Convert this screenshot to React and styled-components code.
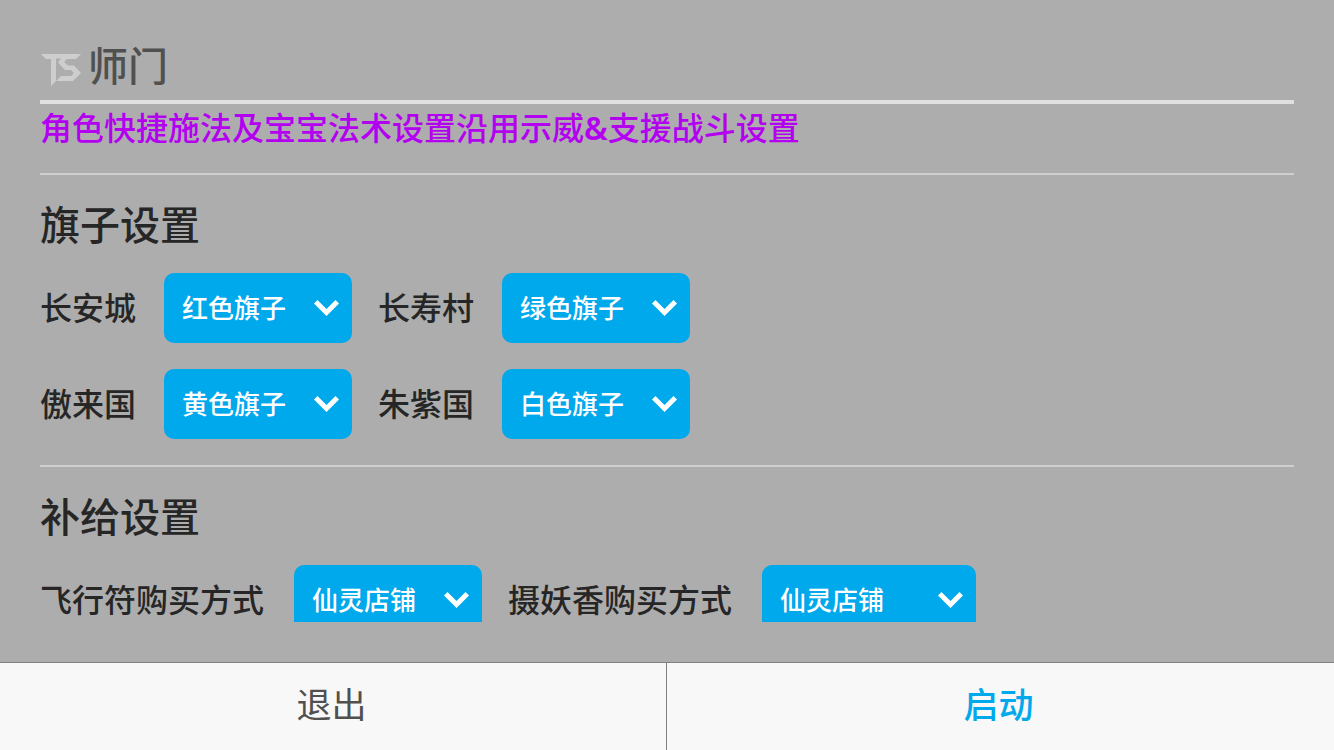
import React from 'react';
import styled, { createGlobalStyle } from 'styled-components';

const GlobalStyle = createGlobalStyle`
  * {
    box-sizing: border-box;
  }

  body {
    margin: 0;
    background: #adadad;
    color: #262626;
    font-family: 'Noto Sans', 'Noto Sans CJK SC', sans-serif;
    font-weight: 500;
  }
`;

const Page = styled.div`
  display: flex;
  flex-direction: column;
  height: 100vh;
`;

const Header = styled.header`
  display: flex;
  align-items: center;
  gap: 6px;
  height: 104px;
  margin: 0 40px;
  padding-top: 32px;
  border-bottom: 4px solid #e0e0e0;
`;

const Logo = styled.svg`
  width: 42px;
  height: 34px;
  margin-top: 8px;
  fill: #cecece;
`;

const Title = styled.h1`
  margin: 0;
  font-size: 40px;
  line-height: 60px;
  font-weight: 500;
  color: #505050;
`;

const Content = styled.main`
  flex: 1;
  min-height: 0;
  margin: 0 40px 40px;
  overflow: hidden;
`;

const Notice = styled.p`
  margin: 0;
  padding-bottom: 21px;
  font-size: 32px;
  line-height: 48px;
  color: #b400f0;
`;

const Ampersand = styled.span`
  font-weight: 600;
`;

const Section = styled.section`
  display: flex;
  flex-direction: column;
  gap: 26px;
  padding: 20px 0 26px;
  border-top: 2px solid #cfcfcf;
`;

const Heading = styled.h2`
  margin: 0 0 -8px;
  font-size: 40px;
  line-height: 60px;
  font-weight: 500;
`;

const Row = styled.div`
  display: flex;
  gap: 26px;
`;

const Field = styled.div`
  display: flex;
  align-items: center;
  gap: ${(props) => (props.$long ? 30 : 28)}px;
`;

const Label = styled.label`
  font-size: 32px;
  line-height: 48px;
  white-space: nowrap;
`;

const SelectBox = styled.div`
  display: grid;
  align-items: center;
  width: ${(props) => (props.$wide ? 214 : 188)}px;
`;

const Select = styled.select`
  grid-area: 1 / 1;
  width: 100%;
  height: 70px;
  padding: 0 18px;
  border: 0;
  border-radius: 10px;
  appearance: none;
  background: #00a8ec;
  color: #fff;
  font-family: inherit;
  font-size: 26px;
  font-weight: 500;
`;

const Arrow = styled.svg`
  grid-area: 1 / 1;
  justify-self: end;
  width: 26px;
  height: 16px;
  margin-right: 12px;
  fill: #fff;
  pointer-events: none;
`;

const Footer = styled.footer`
  display: flex;
  height: 88px;
  border-top: 1px solid #808080;
`;

const Action = styled.button`
  flex: 1;
  padding: 0 4px 4px 0;
  border: 0;
  background: #f8f8f8;
  color: ${(props) => (props.$primary ? '#00a8ec' : '#505050')};
  font-family: inherit;
  font-size: 35px;
  line-height: 48px;
  font-weight: ${(props) => (props.$primary ? 500 : 400)};
  cursor: pointer;
`;

const Divider = styled.span`
  width: 1px;
  margin-left: -1px;
  background: #808080;
`;

const flags = ['红色旗子', '绿色旗子', '黄色旗子', '白色旗子'];
const shops = ['仙灵店铺'];

const Picker = ({ id, label, value, options, long, wide }) => (
  <Field $long={long}>
    <Label htmlFor={id}>{label}</Label>
    <SelectBox $wide={wide}>
      <Select id={id} defaultValue={value}>
        {options.map((option) => (
          <option key={option}>{option}</option>
        ))}
      </Select>
      <Arrow viewBox='0 0 26 16' aria-hidden='true'>
        <path d='M3.5 0 12.5 9 21.5 0 25 3.5 12.5 16 0 3.5z' />
      </Arrow>
    </SelectBox>
  </Field>
);

export const App = () => {
  return (
    <Page>
      <GlobalStyle />
      <Header>
        <Logo viewBox='0 0 42 34' aria-hidden='true'>
          <path d='M1 1H41L36 6H27L24 9L28 12.500H34L41 20L33 28H16L21 23H31L34 20L31 17H25L18 9.500L21 5.500H16V28L11 33V6H6z' />
        </Logo>
        <Title>师门</Title>
      </Header>
      <Content>
        <Notice>
          角色快捷施法及宝宝法术设置沿用示威<Ampersand>&amp;</Ampersand>支援战斗设置
        </Notice>
        <Section>
          <Heading>旗子设置</Heading>
          <Row>
            <Picker id='changan' label='长安城' value='红色旗子' options={flags} />
            <Picker id='changshou' label='长寿村' value='绿色旗子' options={flags} />
          </Row>
          <Row>
            <Picker id='aolai' label='傲来国' value='黄色旗子' options={flags} />
            <Picker id='zhuzi' label='朱紫国' value='白色旗子' options={flags} />
          </Row>
        </Section>
        <Section>
          <Heading>补给设置</Heading>
          <Row>
            <Picker id='feixing' label='飞行符购买方式' value='仙灵店铺' options={shops} long />
            <Picker id='sheyao' label='摄妖香购买方式' value='仙灵店铺' options={shops} long wide />
          </Row>
        </Section>
      </Content>
      <Footer>
        <Action type='button'>退出</Action>
        <Divider />
        <Action type='button' $primary>启动</Action>
      </Footer>
    </Page>
  );
};

export default App;
